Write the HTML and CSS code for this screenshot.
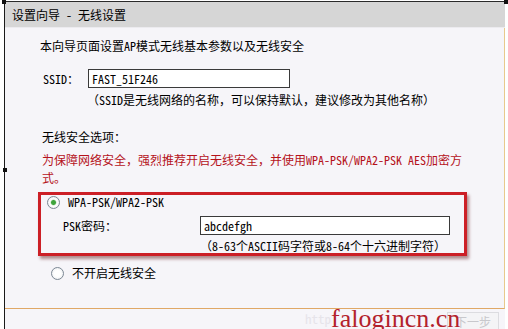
FILE: index.html
```html
<!DOCTYPE html>
<html lang="zh-CN">
<head>
    <meta charset="UTF-8">
    <title>设置向导 - 无线设置</title>
    <link rel="stylesheet" href="styles.css">
</head>
<body>
    <div class="window">
        <span class="handle handle-tl"></span>
        <span class="handle handle-tr"></span>
        <span class="handle handle-ml"></span>

        <div class="title">设置向导 - 无线设置</div>

        <div class="panel">
            <p class="intro">本向导页面设置AP模式无线基本参数以及无线安全</p>

            <div class="ssid-row">
                <label class="ssid-label" for="ssid">SSID：</label>
                <input class="text-input ssid-input" id="ssid" type="text" value="FAST_51F246">
            </div>
            <p class="hint ssid-hint">（SSID是无线网络的名称，可以保持默认，建议修改为其他名称）</p>

            <p class="section-title">无线安全选项：</p>
            <p class="warning">为保障网络安全，强烈推荐开启无线安全，并使用WPA-PSK/WPA2-PSK AES加密方式。</p>

            <div class="secure-box">
                <label class="radio-row">
                    <input class="radio" type="radio" name="sec" checked>
                    <span>WPA-PSK/WPA2-PSK</span>
                </label>
                <div class="psk-row">
                    <span class="psk-label">PSK密码：</span>
                    <input class="text-input psk-input" type="text" value="abcdefgh">
                </div>
                <p class="hint psk-hint">（8-63个ASCII码字符或8-64个十六进制字符）</p>
            </div>

            <label class="radio-row radio-off">
                <input class="radio" type="radio" name="sec">
                <span>不开启无线安全</span>
            </label>
        </div>

        <div class="footer">
            <span class="faint">http</span>
            <button class="btn-next">下一步</button>
            <span class="watermark">falogincn.cn</span>
        </div>
    </div>
</body>
</html>
```

FILE: styles.css
```css
body {
    margin: 0;
    background: #fff;
    font-family: "Noto Sans Mono CJK SC", "Noto Sans CJK SC", monospace;
    font-size: 12px;
    color: #000;
}

p {
    margin: 0;
}

.window {
    position: relative;
    margin: 1px 0 0 4px;
    width: 500px;
    border-left: 1px solid #1a1a1a;
    border-top: 1px solid #2a2a2a;
}

.handle {
    position: absolute;
    width: 4px;
    height: 4px;
    background: #111;
}

.handle-tl { left: -3px; top: -2px; }
.handle-tr { right: -3px; top: -2px; }
.handle-ml { left: -2px; top: 166px; }

.title {
    height: 25px;
    line-height: 25px;
    padding-left: 7px;
    background: #d6d6d6;
    border-bottom: 1px solid #ecebef;
}

.panel {
    background: #f6f5f9;
    border-right: 1px solid #e8c98c;
    border-bottom: 1px solid #e0a866;
    padding: 9px 0 26px 35px;
    line-height: 18px;
}

.ssid-row {
    display: flex;
    align-items: center;
    margin-top: 14px;
    padding-left: 3px;
}

.ssid-label {
    width: 45px;
}

.text-input {
    box-sizing: border-box;
    height: 19px;
    border: 1px solid #3a3a3a;
    background: #fff;
    font: inherit;
    padding: 0 3px;
    color: #000;
}

.ssid-input {
    width: 202px;
}

.ssid-hint {
    margin: 3px 0 0 47px;
}

.section-title {
    margin-top: 19px;
    padding-left: 2px;
}

.warning {
    color: #b5121b;
    width: 428px;
    padding-left: 2px;
    margin: 5px 0 5px;
}

.secure-box {
    width: 423px;
    margin-left: -2px;
    border: 3px solid #cc1f26;
    box-shadow: 2px 3px 3px rgba(90, 10, 10, 0.45);
    line-height: 14px;
}

.radio-row {
    display: flex;
    align-items: center;
    gap: 8px;
    padding-left: 6px;
}

.radio {
    appearance: none;
    box-sizing: border-box;
    width: 13px;
    height: 13px;
    margin: 0;
    border: 1px solid #7c8894;
    border-radius: 50%;
    background: radial-gradient(circle, #fff 40%, #e4e6ea 100%);
}

.radio:checked {
    background: radial-gradient(circle, #3ea43c 0 2px, #dff0df 3px, #fff 45%, #e4e6ea 100%);
}

.psk-row {
    display: flex;
    align-items: center;
    margin-top: 7px;
    padding-left: 22px;
}

.psk-label {
    width: 137px;
}

.psk-input {
    width: 250px;
}

.psk-hint {
    margin: 4px 0 0 159px;
}

.radio-off {
    margin-top: 8px;
    padding-left: 11px;
}

.footer {
    position: relative;
    height: 21px;
    display: flex;
    align-items: center;
    justify-content: flex-end;
    padding-right: 6px;
    background: #f6f5f9;
}

.faint {
    position: absolute;
    left: 300px;
    top: 2px;
    line-height: 16px;
    color: #e6e4ea;
    font-size: 13px;
}

.btn-next {
    width: 52px;
    height: 18px;
    margin-top: 2px;
    border: 1px solid #dcdce0;
    background: #f4f4f6;
    color: #c8c8cc;
    font: inherit;
    padding: 0;
}

.watermark {
    position: absolute;
    left: 326px;
    bottom: -2px;
    font-family: "Liberation Serif", "Times New Roman", serif;
    font-size: 26px;
    line-height: 26px;
    color: #b3222c;
}
```
